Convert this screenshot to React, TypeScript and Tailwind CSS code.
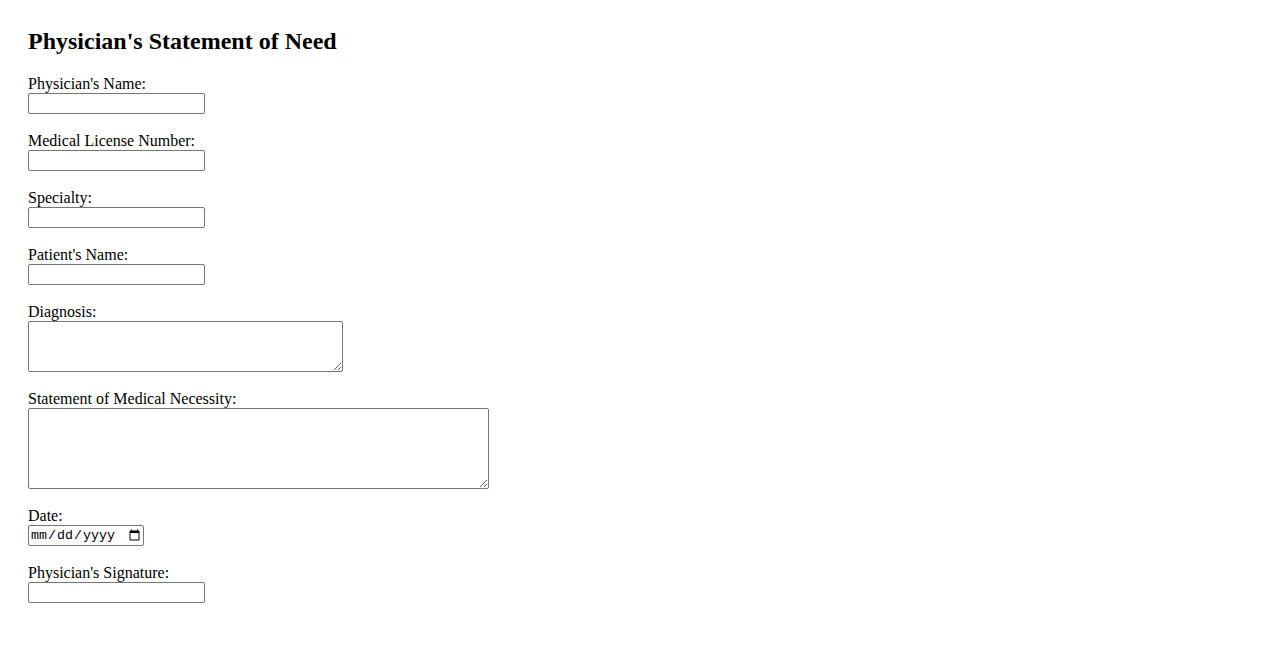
const FIELDS = [
  { label: "Physician's Name:", kind: "text" },
  { label: "Medical License Number:", kind: "text" },
  { label: "Specialty:", kind: "text" },
  { label: "Patient's Name:", kind: "text" },
  { label: "Diagnosis:", kind: "small-area" },
  { label: "Statement of Medical Necessity:", kind: "big-area" },
  { label: "Date:", kind: "date" },
  { label: "Physician's Signature:", kind: "text" },
];

const box = "block border border-[#767676] rounded-[2px] bg-white";

export default function App() {
  return (
    <div className="min-h-screen bg-white pl-[28px] pt-[28px] text-black font-['Liberation_Serif',serif]">
      <h2 className="text-[24px] font-bold leading-[26px] mb-[22px]">Physician's Statement of Need</h2>
      <form className="flex flex-col gap-[19px]">
        {FIELDS.map((f) => (
          <div key={f.label} className="flex flex-col items-start">
            <label className="text-[16px] leading-[15px] mb-[2px]">{f.label}</label>
            {f.kind === "text" && <input type="text" className={`${box} w-[177px] h-[21px] px-[2px] text-[13px]`} />}
            {f.kind === "small-area" && <textarea className={`${box} w-[315px] h-[51px] resize`} />}
            {f.kind === "big-area" && <textarea className={`${box} w-[461px] h-[81px] resize`} />}
            {f.kind === "date" && (
              <input type="date" className={`${box} w-[116px] h-[21px] pl-[1px] text-[13.33px] font-['Liberation_Mono',monospace]`} />
            )}
          </div>
        ))}
      </form>
    </div>
  );
}
